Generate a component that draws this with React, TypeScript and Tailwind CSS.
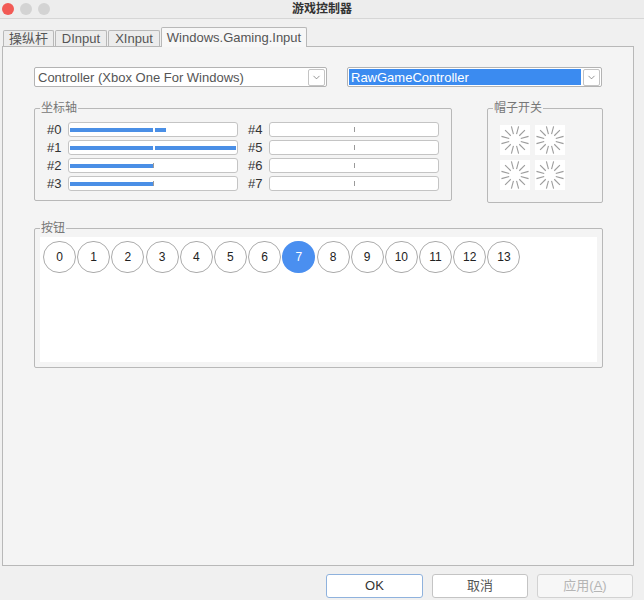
import { ChevronDown } from "lucide-react";

type Axis = { name: string; value: number | null };

const leftAxes: Axis[] = [
  { name: "#0", value: 0.58 },
  { name: "#1", value: 1 },
  { name: "#2", value: 0.5 },
  { name: "#3", value: 0.5 },
];

const rightAxes: Axis[] = [
  { name: "#4", value: null },
  { name: "#5", value: null },
  { name: "#6", value: null },
  { name: "#7", value: null },
];

const buttons = Array.from({ length: 14 }, (_, i) => i);
const pressed = 7;

const Combo = ({ text, selected, width }: { text: string; selected?: boolean; width: string }) => (
  <div className={`${width} h-[20px] flex items-center bg-white border border-[#b3b3b3] rounded-[2px] pl-[1px] pr-[1px]`}>
    <div
      className={`flex-1 h-[16px] flex items-center pl-[2px] text-[13px] leading-none ${
        selected ? "bg-[#3b8bf0] text-white" : "text-[#555]"
      }`}
    >
      {text}
    </div>
    <div className="ml-[2px] w-[17px] h-[17px] border border-[#c4c4c4] rounded-[2px] flex items-center justify-center text-[#666]">
      <ChevronDown size={11} strokeWidth={1.5} />
    </div>
  </div>
);

const AxisBar = ({ axis }: { axis: Axis }) => {
  const over = axis.value !== null && axis.value > 0.5;
  return (
    <div className="flex items-center h-[15px]">
      <span className="w-[21px] text-[13px] leading-none text-[#333]">{axis.name}</span>
      <div className="relative w-[170px] h-[15px] bg-white border border-[#c4c4c4] rounded-[3px] flex items-center px-[1px]">
        {axis.value !== null && (
          <div className="h-[4px] bg-[#4a8fe6]" style={{ width: `${axis.value * 100}%` }} />
        )}
        {over ? (
          <div className="absolute left-[84px] top-[4px] w-[2px] h-[5px] bg-white" />
        ) : (
          <div className="absolute left-[84px] top-[4px] w-[1px] h-[5px] bg-[#9a9a9a]" />
        )}
      </div>
    </div>
  );
};

const Hat = () => {
  const spokes = Array.from({ length: 12 }, (_, i) => (i * Math.PI) / 6 + Math.PI / 12);
  return (
    <svg width="30" height="30" viewBox="0 0 30 30" className="bg-white">
      {spokes.map((a, i) => (
        <line
          key={i}
          x1={15 + Math.cos(a) * 6}
          y1={15 + Math.sin(a) * 6}
          x2={15 + Math.cos(a) * 14}
          y2={15 + Math.sin(a) * 14}
          stroke="#9c9c9c"
          strokeWidth="1.1"
        />
      ))}
    </svg>
  );
};

const GroupBox = ({ label, className, children }: { label: string; className: string; children: React.ReactNode }) => (
  <div className={`relative border border-[#b8b8b8] rounded-[2px] ${className}`}>
    <span className="absolute -top-[9px] left-[5px] bg-[#f4f4f4] px-[1px] text-[12px] leading-[16px] text-[#777]">
      {label}
    </span>
    {children}
  </div>
);

export default function App() {
  return (
    <div className="w-[644px] h-[600px] bg-[#f0f0f0] flex flex-col font-['Liberation_Sans','Noto_Sans_CJK_SC',sans-serif] overflow-hidden">
      {/* title bar */}
      <div className="h-[19px] border-b border-[#d6d6d6] bg-[#ededed] grid grid-cols-[1fr_auto_1fr] items-center">
        <div className="flex gap-[6px] pl-[2px]">
          <div className="w-[12px] h-[12px] rounded-full bg-[#f25a55]" />
          <div className="w-[12px] h-[12px] rounded-full bg-[#d3d3d3]" />
          <div className="w-[12px] h-[12px] rounded-full bg-[#d3d3d3]" />
        </div>
        <div className="text-[12px] font-bold text-[#333] leading-none">游戏控制器</div>
        <div />
      </div>

      {/* tabs */}
      <div className="mt-[8px] ml-[3px] flex items-end gap-[1px] h-[19px] relative z-10">
        {["操纵杆", "DInput", "XInput"].map((t, i) => (
          <div
            key={t}
            className={`${i === 0 ? "w-[51px]" : "w-[52px]"} h-[16px] border border-b-0 border-[#b8b8b8] rounded-t-[2px] bg-[#ececec] flex items-center justify-center text-[13px] leading-none text-[#555]`}
          >
            {t}
          </div>
        ))}
        <div className="w-[146px] h-[20px] -mb-[1px] border border-b-0 border-[#b8b8b8] rounded-t-[2px] bg-[#f7f7f7] flex items-center justify-center text-[13px] leading-none text-[#555]">
          Windows.Gaming.Input
        </div>
      </div>

      {/* tab pane */}
      <div className="mx-[2px] w-[632px] h-[520px] border border-[#b8b8b8] bg-[#f4f4f4] flex flex-col pl-[31px] pt-[20px]">
        <div className="flex gap-[20px]">
          <Combo text="Controller (Xbox One For Windows)" width="w-[293px]" />
          <Combo text="RawGameController" selected width="w-[255px]" />
        </div>

        <div className="mt-[21px] flex items-start gap-[35px]">
          <GroupBox label="坐标轴" className="w-[418px] h-[93px] pt-[13px] pl-[12px]">
            <div className="flex gap-[10px]">
              <div className="flex flex-col gap-[3px]">
                {leftAxes.map((a) => (
                  <AxisBar key={a.name} axis={a} />
                ))}
              </div>
              <div className="flex flex-col gap-[3px]">
                {rightAxes.map((a) => (
                  <AxisBar key={a.name} axis={a} />
                ))}
              </div>
            </div>
          </GroupBox>
          <GroupBox label="帽子开关" className="w-[116px] h-[95px] pt-[16px] pl-[12px]">
            <div className="grid grid-cols-[30px_30px] gap-[5px]">
              <Hat />
              <Hat />
              <Hat />
              <Hat />
            </div>
          </GroupBox>
        </div>

        <GroupBox label="按钮" className="mt-[25px] w-[569px] h-[140px] pt-[8px] px-[5px] pb-[5px] flex">
          <div className="flex-1 bg-white pt-[4px] pl-[3px] flex items-start gap-[1.2px]">
            {buttons.map((b) => (
              <div
                key={b}
                className={`w-[33px] h-[32px] rounded-full flex items-center justify-center text-[12px] leading-none ${
                  b === pressed
                    ? "bg-[#4a8ff0] text-white"
                    : "bg-white border border-[#ababab] text-[#222]"
                }`}
              >
                {b}
              </div>
            ))}
          </div>
        </GroupBox>
      </div>

      {/* dialog buttons */}
      <div className="mt-[8px] flex justify-end gap-[9px] pr-[11px]">
        <button className="w-[97px] h-[24px] bg-white border border-[#8fb2dd] rounded-[3px] text-[13px] text-[#333]">
          OK
        </button>
        <button className="w-[96px] h-[24px] bg-white border border-[#c4c4c4] rounded-[3px] text-[13px] text-[#555]">
          取消
        </button>
        <button className="w-[96px] h-[24px] bg-[#f7f7f7] border border-[#d2d2d2] rounded-[3px] text-[13px] text-[#b5b5b5]">
          应用(<span className="underline">A</span>)
        </button>
      </div>
    </div>
  );
}
